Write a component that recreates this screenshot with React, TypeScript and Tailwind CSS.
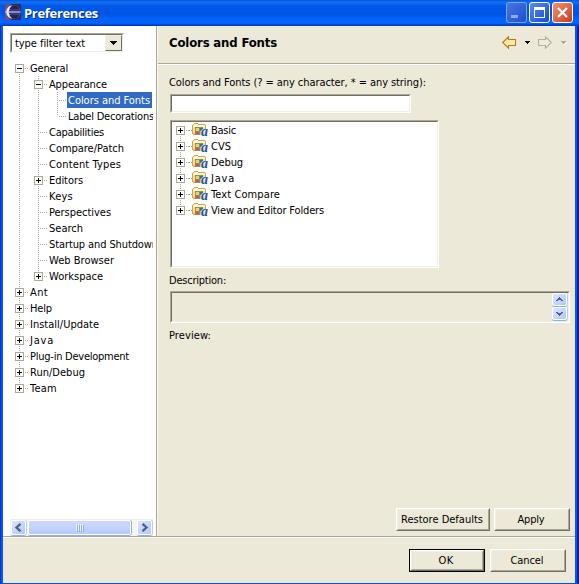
import { useLayoutEffect, useRef, useState } from "react";
import type { ReactNode } from "react";

const LINE = "#aca899";

/** Single-line text, tracked so that it takes up the given width. */
function Label({ text, width, className = "" }: { text: string; width: number; className?: string }) {
  const ref = useRef<HTMLSpanElement>(null);
  const [spacing, setSpacing] = useState(0);
  useLayoutEffect(() => {
    const el = ref.current;
    if (!el) return;
    el.style.letterSpacing = "0px";
    setSpacing((width - el.getBoundingClientRect().width) / text.length);
    el.style.letterSpacing = "";
  }, [text, width]);
  return (
    <span className={`inline-block shrink-0 whitespace-pre ${className}`}>
      <span ref={ref} style={{ letterSpacing: `${spacing}px` }}>
        {text}
      </span>
    </span>
  );
}

type Cell = "pipe" | "tee" | "end" | "blank" | "minus" | "minusFirst" | "plus" | "plusEnd" | "plusFirst";

/** One 19px wide step of the tree's connector lines. */
function Connector({ kind }: { kind: Cell }) {
  const box = kind.startsWith("plus") || kind.startsWith("minus");
  const up = kind !== "blank" && !kind.endsWith("First");
  const down = kind === "pipe" || kind === "tee" || (box && kind !== "plusEnd");
  return (
    <svg width="19" height="16" viewBox="0 0 19 16" className="block shrink-0" shapeRendering="crispEdges">
      {up && <path d="M9.5 0V8" stroke={LINE} strokeDasharray="1 1" />}
      {down && <path d="M9.5 8V16" stroke={LINE} strokeDasharray="1 1" />}
      {kind !== "pipe" && kind !== "blank" && <path d="M11 8.5H18" stroke={LINE} strokeDasharray="1 1" />}
      {box && (
        <>
          <rect x="5.5" y="4.5" width="8" height="8" fill="#fff" stroke={LINE} />
          <path d="M7 8.5H12" stroke="#000" />
          {kind.startsWith("plus") && <path d="M9.5 6V11" stroke="#000" />}
        </>
      )}
    </svg>
  );
}

const TREE: { text: string; width: number; cells: Cell[]; selected?: boolean }[] = [
  { text: "General", width: 38, cells: ["minusFirst"] },
  { text: "Appearance", width: 58, cells: ["pipe", "minus"] },
  { text: "Colors and Fonts", width: 82, cells: ["pipe", "pipe", "tee"], selected: true },
  { text: "Label Decorations", width: 86, cells: ["pipe", "pipe", "end"] },
  { text: "Capabilities", width: 55, cells: ["pipe", "tee"] },
  { text: "Compare/Patch", width: 75, cells: ["pipe", "tee"] },
  { text: "Content Types", width: 72, cells: ["pipe", "tee"] },
  { text: "Editors", width: 34, cells: ["pipe", "plus"] },
  { text: "Keys", width: 24, cells: ["pipe", "tee"] },
  { text: "Perspectives", width: 62, cells: ["pipe", "tee"] },
  { text: "Search", width: 34, cells: ["pipe", "tee"] },
  { text: "Startup and Shutdown", width: 109, cells: ["pipe", "tee"] },
  { text: "Web Browser", width: 65, cells: ["pipe", "tee"] },
  { text: "Workspace", width: 54, cells: ["pipe", "plusEnd"] },
  { text: "Ant", width: 18, cells: ["plus"] },
  { text: "Help", width: 22, cells: ["plus"] },
  { text: "Install/Update", width: 69, cells: ["plus"] },
  { text: "Java", width: 24, cells: ["plus"] },
  { text: "Plug-in Development", width: 99, cells: ["plus"] },
  { text: "Run/Debug", width: 55, cells: ["plus"] },
  { text: "Team", width: 27, cells: ["plusEnd"] },
];

const FOLDERS: { text: string; width: number; cell: Cell }[] = [
  { text: "Basic", width: 25, cell: "plusFirst" },
  { text: "CVS", width: 20, cell: "plus" },
  { text: "Debug", width: 32, cell: "plus" },
  { text: "Java", width: 24, cell: "plus" },
  { text: "Text Compare", width: 69, cell: "plus" },
  { text: "View and Editor Folders", width: 113, cell: "plusEnd" },
];

function FolderIcon() {
  return (
    <span className="relative block h-4 w-4 shrink-0">
      <svg width="16" height="16" viewBox="0 0 16 16" className="block" shapeRendering="crispEdges">
        <path d="M1 2H2V1H6V2H13V3H14V12H13V13H1V12H0V3H1Z" fill="#dca24a" />
        <path d="M2 2H6V3H13V12H1V3H2Z" fill="#fbe0a0" />
        <path d="M2 2H6V3H13V5H1V3H2Z" fill="#fff2cc" />
        <path d="M1 10H4V12H1Z" fill="#f4c878" />
        <rect x="3" y="5" width="8" height="8" fill="#8f8a6c" />
        <rect x="4" y="6" width="3" height="3" fill="#f4dc3c" />
        <rect x="8" y="6" width="3" height="3" fill="#2070c4" />
        <rect x="4" y="10" width="3" height="2" fill="#e04850" />
        <rect x="8" y="10" width="2" height="2" fill="#3c9c50" />
      </svg>
      <span className="absolute top-[4px] left-[9px] font-['Liberation_Serif',serif] text-[14px] leading-[12px] font-bold text-[#1f57a8] italic [text-shadow:-1px_0_0_#f5ead0]">a</span>
    </span>
  );
}

function EclipseIcon() {
  return (
    <svg width="16" height="16" viewBox="0 0 16 16" className="block shrink-0">
      <rect width="16" height="16" fill="#352b58" />
      <path d="M0 0H6L2 4V12L6 16H0Z" fill="#66527c" />
      <circle cx="9" cy="8" r="6.6" fill="#5c5896" />
      <path d="M4 5.5A5.6 5.6 0 0 1 14.5 5.5ZM4 10.5A5.6 5.6 0 0 0 14.5 10.5Z" fill="#242058" />
      <path d="M6.5 1.6A6.6 6.6 0 0 0 6.5 14.4A8.6 8.6 0 0 1 6.5 1.6Z" fill="#f2eef8" stroke="#d8d2ea" strokeWidth="0.6" />
      <path d="M0 8H3" stroke="#d8d2ea" strokeWidth="1" />
      <path d="M4 6.5H15M4 9.5H15" stroke="#3a3678" strokeWidth="1" />
      <path d="M4 8H15.5" stroke="#a8acec" strokeWidth="1.2" />
    </svg>
  );
}

function CaptionButton({ tone, children }: { tone: string; children: ReactNode }) {
  return (
    <div className={`h-[21px] w-[21px] rounded-[3px] border ${tone}`}>
      <svg width="19" height="19" viewBox="0 0 19 19" className="block">
        {children}
      </svg>
    </div>
  );
}

function NavArrow({ fill, stroke, flip }: { fill: string; stroke: string; flip?: boolean }) {
  return (
    <svg width="14" height="13" viewBox="0 0 14 13" className={flip ? "block -scale-x-100" : "block"}>
      <path d="M0.7 6.5L6.5 0.8V3.5H13.5V9.5H6.5V12.2Z" fill={fill} stroke={stroke} strokeWidth="1.1" />
    </svg>
  );
}

function Caret({ color, shadow }: { color: string; shadow?: boolean }) {
  return (
    <svg width="6" height="4" viewBox="0 0 6 4" className="block" shapeRendering="crispEdges">
      {shadow && <path d="M5 1H6V2H5V3H4V4H3V3H4V2H5Z" fill="#fff" />}
      <path d="M0 0H5V1H4V2H3V3H2V2H1V1H0Z" fill={color} />
    </svg>
  );
}

/** Solid scroll arrows drawn on the pixel grid, two pixels thick. */
function ScrollButton({ size, dir }: { size: string; dir: "up" | "down" | "left" | "right" }) {
  const vertical = dir === "up" || dir === "down";
  return (
    <div className={`flex shrink-0 items-center justify-center rounded-[2px] border border-white bg-linear-to-br from-[#dce6ff] to-[#b2c7f8] shadow-[0_1px_0_#8fb0e4,1px_0_0_#b9cdf0] ${size}`}>
      <svg width="9" height="9" viewBox="0 0 9 9" className="block shrink-0" shapeRendering={vertical ? "crispEdges" : "auto"}>
        {dir === "up" && <path d="M4 2H5V3H6V4H7V5H8V6H6V5H5V5H4V5H3V6H1V5H2V4H3V3H4Z" fill="#4d6185" />}
        {dir === "down" && <path d="M1 3H3V4H6V3H8V4H7V5H6V6H5V7H4V6H3V5H2V4H1Z" fill="#4d6185" />}
        {dir === "left" && <path d="M6.5 0.8L2.5 4.5L6.5 8.2" fill="none" stroke="#4d6185" strokeWidth="2.3" />}
        {dir === "right" && <path d="M2.5 0.8L6.5 4.5L2.5 8.2" fill="none" stroke="#4d6185" strokeWidth="2.3" />}
      </svg>
    </div>
  );
}

const SUNKEN = "border border-t-[#aca899] border-l-[#aca899] border-r-white border-b-white";
const SUNKEN_INNER = "border border-t-[#716f64] border-l-[#716f64] border-r-[#f1efe2] border-b-[#f1efe2]";

function PushButton({ text, textWidth, size, primary }: { text: string; textWidth: number; size: string; primary?: boolean }) {
  return (
    <div className={`shrink-0 ${size} ${primary ? "border border-black" : ""}`}>
      <div className="h-full w-full border border-t-white border-l-white border-r-[#716f64] border-b-[#716f64]">
        <div className="flex h-full w-full items-center justify-center border border-t-[#f1efe2] border-l-[#f1efe2] border-r-[#aca899] border-b-[#aca899] pr-[2px]">
          <Label text={text} width={textWidth} />
        </div>
      </div>
    </div>
  );
}

export default function App() {
  return (
    <div className="flex h-[584px] w-[579px] flex-col overflow-hidden bg-[#ece9d8] font-['DejaVu_Sans_Condensed','DejaVu_Sans',sans-serif] text-[11px] leading-4 text-black">
      <header className="flex h-[26px] shrink-0 items-start bg-[linear-gradient(to_bottom,#0a51d8_0px,#1171f6_2px,#0058e8_6px,#0054e3_14px,#0064fb_19px,#0066ff_23px,#0042cc_25px,#0038b8_26px)] pl-[5px]">
        <div className="pt-[4px]">
          <EclipseIcon />
        </div>
        <Label
          text="Preferences"
          width={74}
          className="ml-[3px] pt-[5px] font-['Open_Sans',sans-serif] text-[13px] font-bold text-white [text-shadow:1px_1px_0_#0a2a88]"
        />
        <div className="ml-auto flex gap-[2px] pt-[2px] pr-[6px]">
          <CaptionButton tone="border-[#7da2ee] bg-linear-to-br from-[#4676e0] to-[#1d4fd0]">
            <path d="M4 12H11V15H4Z" fill="#8fabf0" />
          </CaptionButton>
          <CaptionButton tone="border-white bg-linear-to-br from-[#5a8cf4] to-[#1548cc]">
            <path d="M4 4H15V15H4Z M5 7V14H14V7Z" fill="#fff" fillRule="evenodd" />
          </CaptionButton>
          <CaptionButton tone="border-white bg-linear-to-br from-[#ee9276] to-[#cc3608]">
            <path d="M5 5L14 14M14 5L5 14" stroke="#fff" strokeWidth="2.3" />
          </CaptionButton>
        </div>
      </header>

      <div className="flex h-[558px] flex-col border-r-2 border-b border-l border-r-[#001ea0] border-b-[#0a4fe0] border-l-[#0831d9]">
        <div className="flex h-[557px] flex-col border-r-2 border-l-2 border-[#0855f0]">
          <div className="flex h-[510px] shrink-0">
            <aside className="flex w-[154px] shrink-0 flex-col border-r border-[#aca899] bg-white pt-[7px] pl-[7px]">
              <div className={`h-[20px] w-[114px] shrink-0 ${SUNKEN}`}>
                <div className={`flex h-full w-full bg-white pl-[3px] ${SUNKEN_INNER}`}>
                  <Label text="type filter text" width={70} className="pt-px" />
                  <div className="ml-auto flex h-[16px] w-[17px] items-center justify-center border border-t-[#f1efe2] border-l-[#f1efe2] border-r-[#716f64] border-b-[#716f64] bg-[#ece9d8]">
                    <svg width="7" height="4" viewBox="0 0 7 4" shapeRendering="crispEdges">
                      <path d="M0 0H7V1H6V2H5V3H4V4H3V3H2V2H1V1H0Z" />
                    </svg>
                  </div>
                </div>
              </div>

              <div className="mt-[7px] w-[143px] overflow-hidden">
                {TREE.map((row) => (
                  <div key={row.text} className="flex h-4">
                    {row.cells.map((cell, i) => (
                      <Connector key={i} kind={cell} />
                    ))}
                    <div className={`shrink-0 pl-px ${row.selected ? "h-4 w-[85px] bg-[#316ac5] text-white" : ""}`}>
                      <Label text={row.text} width={row.width} className="pt-px" />
                    </div>
                  </div>
                ))}
              </div>

              <div className="mt-auto flex h-[17px] w-[143px] shrink-0 items-start border-t border-[#eeede5] bg-[#f6f6f2] pl-px">
                <ScrollButton size="h-[15px] w-[15px]" dir="left" />
                <div className="ml-[2px] flex h-[15px] w-[103px] items-center justify-center gap-px rounded-[2px] border border-white bg-linear-to-b from-[#cbdafd] to-[#b7caf8] shadow-[0_1px_0_#8fb0e4,1px_0_0_#8fb0e4]">
                  {[0, 1, 2, 3].map((i) => (
                    <div key={i} className="h-[7px] w-px shrink-0 bg-[#eef4fe] shadow-[1px_1px_0_#8cb0f8]" />
                  ))}
                </div>
                <ScrollButton size="ml-auto mr-px h-[15px] w-[15px]" dir="right" />
              </div>
            </aside>

            <main className="flex w-[418px] flex-col border-l border-white/60">
              <div className="flex h-[39px] shrink-0 items-start border-b border-white">
                <div className="flex h-[38px] w-full border-b border-[#aca899] pl-[11px]">
                  <Label
                    text="Colors and Fonts"
                    width={108}
                    className="pt-[9px] font-['DejaVu_Sans_Condensed',sans-serif] text-[13px] font-bold"
                  />
                  <div className="mt-[10px] ml-auto flex h-[13px] items-center pr-[8px]">
                    <NavArrow fill="#fdeaa6" stroke="#b8781c" />
                    <div className="ml-[9px]">
                      <Caret color="#000" />
                    </div>
                    <div className="ml-[7px]">
                      <NavArrow fill="#efecdf" stroke="#b3af9f" flip />
                    </div>
                    <div className="ml-[9px]">
                      <Caret color="#aca899" shadow />
                    </div>
                  </div>
                </div>
              </div>

              <div className="flex flex-1 flex-col items-start pl-[11px]">
                <Label text="Colors and Fonts (? = any character, * = any string):" width={257} className="mt-[10px]" />
                <div className={`ml-px mt-[3px] h-[19px] w-[241px] ${SUNKEN}`}>
                  <div className={`h-full w-full bg-white ${SUNKEN_INNER}`} />
                </div>

                <div className={`ml-px mt-[7px] h-[148px] w-[269px] ${SUNKEN}`}>
                  <div className={`h-full w-full bg-white ${SUNKEN_INNER}`}>
                    {FOLDERS.map((row) => (
                      <div key={row.text} className="-ml-[2px] flex h-4 pl-px">
                        <Connector kind={row.cell} />
                        <div className="mr-[3px] -ml-px flex items-center">
                          <svg width="3" height="16" viewBox="0 0 3 16" shapeRendering="crispEdges">
                            <path d="M0 8.5H3" stroke={LINE} strokeDasharray="1 1" />
                          </svg>
                          <FolderIcon />
                        </div>
                        <Label text={row.text} width={row.width} className="pt-px" />
                      </div>
                    ))}
                  </div>
                </div>

                <Label text="Description:" width={57} className="mt-[5px]" />
                <div className={`ml-px mt-[2px] h-[32px] w-[400px] ${SUNKEN}`}>
                  <div className={`flex h-full w-full flex-col items-end pr-px ${SUNKEN_INNER}`}>
                    <ScrollButton size="h-[13px] w-[15px]" dir="up" />
                    <ScrollButton size="mt-px h-[13px] w-[15px]" dir="down" />
                  </div>
                </div>
                <Label text="Preview:" width={42} className="mt-[5px]" />

                <div className="mt-auto mb-[5px] flex gap-[4px] self-end pr-[5px]">
                  <PushButton text="Restore Defaults" textWidth={82} size="h-[23px] w-[94px]" />
                  <PushButton text="Apply" textWidth={27} size="h-[23px] w-[76px]" />
                </div>
              </div>
            </main>
          </div>

          <footer className="border-t border-[#aca899]">
            <div className="flex justify-end gap-[5px] border-t border-white pt-[11px] pr-[9px]">
              <PushButton text="OK" textWidth={15} size="h-[23px] w-[76px]" primary />
              <PushButton text="Cancel" textWidth={33} size="h-[23px] w-[76px]" />
            </div>
          </footer>
        </div>
      </div>
    </div>
  );
}
